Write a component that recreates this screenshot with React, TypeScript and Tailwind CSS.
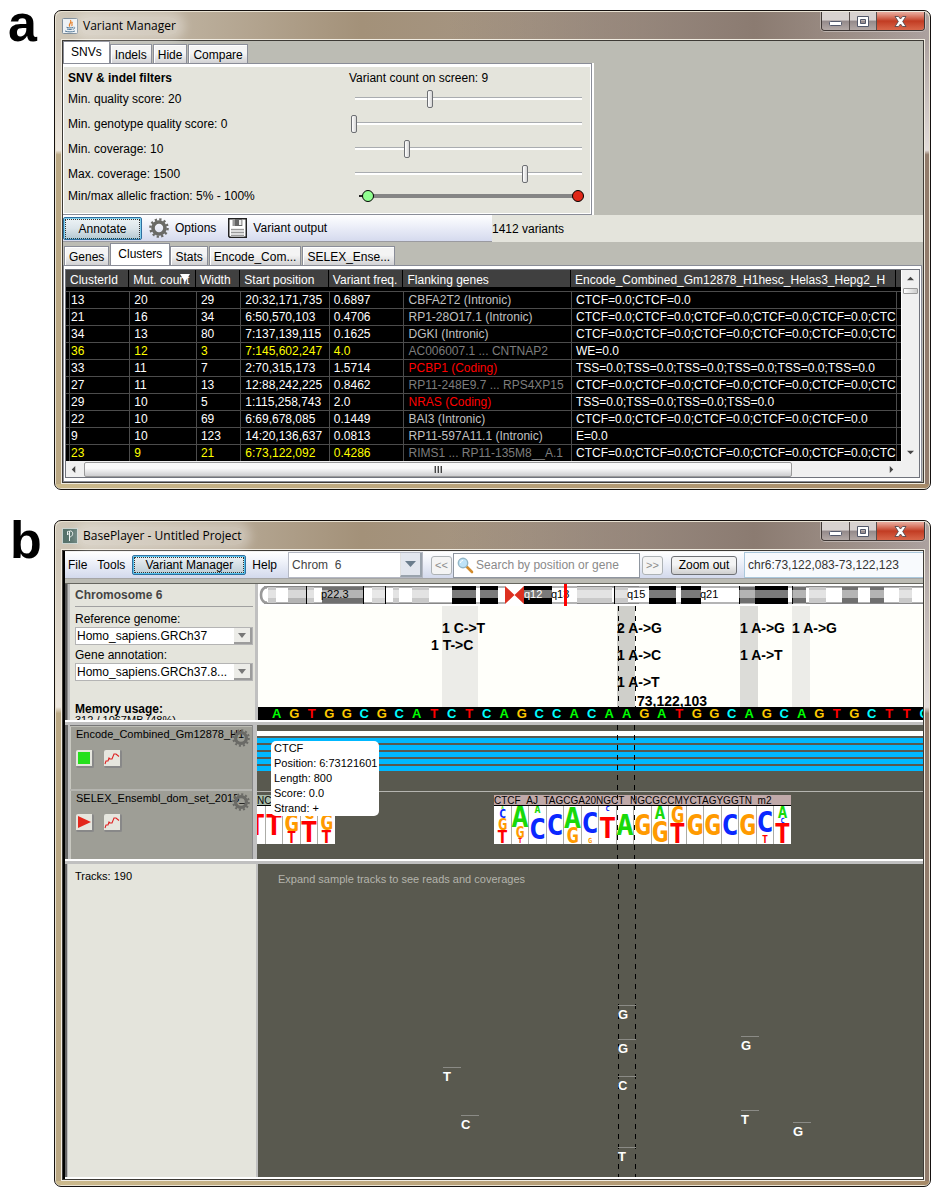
import React from "react";

/* ---------- window chrome ---------- */

function WindowControls() {
  return (
    <div className="absolute top-0 right-1 flex h-[19px] rounded-b-[4px] border border-t-0 border-[#3f3836] shadow-[0_0_0_1px_rgba(255,255,255,0.35)]">
      <button aria-label="Minimize" className="flex w-[28px] items-center justify-center rounded-bl-[3px] border-r border-[#574e4c] bg-linear-to-b from-[#d8d2d0] from-45% via-[#93898a] via-50% to-[#b3a9a6]">
        <svg width="13" height="12" viewBox="0 0 13 12"><rect x="0.5" y="6.5" width="12" height="4" rx="1" fill="#fff" stroke="#53586a" /></svg>
      </button>
      <button aria-label="Maximize" className="flex w-[27px] items-center justify-center border-r border-[#574e4c] bg-linear-to-b from-[#d8d2d0] from-45% via-[#93898a] via-50% to-[#b3a9a6]">
        <svg width="12" height="11" viewBox="0 0 12 11"><path fillRule="evenodd" d="M.5.5h11v10H.5zM3.500 3.500v4h5v-4z" fill="#fff" stroke="#53586a" /></svg>
      </button>
      <button aria-label="Close" className="flex w-[47px] items-center justify-center rounded-br-[3px] bg-linear-to-b from-[#e6a597] from-5% via-[#c23b22] via-50% to-[#d8664a]">
        <svg width="13" height="11" viewBox="0 0 13 11"><path d="M1 .5h3.500l2 2.500 2-2.500H12L8.700 5.500 12 10.500H8.500l-2-2.500-2 2.500H1l3.300-5z" fill="#fff" stroke="#53494f" strokeWidth="0.900" /></svg>
      </button>
    </div>
  );
}

function AppWindow({ title, icon, children }: { title: string; icon: React.ReactNode; children: React.ReactNode }) {
  return (
    <section className="flex-1 overflow-hidden rounded-[7px] border border-[#15110f] bg-[#e9e2d2] p-px">
      <header className="relative flex h-[27px] items-center rounded-t-[6px] bg-linear-to-r from-[#cfc7b8] via-[#a39179] via-35% to-[#aca19f] pl-[6px] font-['Open_Sans',sans-serif] text-[12px] text-black">
        <div className="absolute inset-0 rounded-t-[6px] bg-linear-to-r from-transparent from-45% via-[#8b7b71] via-80% to-transparent" />
        {icon}
        <h1 className="relative ml-[2px] rounded-full bg-white/30 px-[3px] leading-[18px] shadow-[0_0_10px_6px_rgba(255,255,255,0.3)]">{title}</h1>
        <WindowControls />
      </header>
      <div className="flex">
        <div className="w-[5px] bg-linear-to-b from-[#cdc4b4] from-0% via-[#ece6de] via-25% to-[#b9a783] to-26%" />
        <div className="min-w-0 flex-1 border border-[#f0ebe0]">
          <div className="border border-[#3d3a35] bg-[#bcbcb4]">{children}</div>
        </div>
        <div className="w-[4px] bg-linear-to-b from-[#aca19f] from-0% via-[#e2dcda] via-25% to-[#927c6c] to-26%" />
      </div>
      <div className="h-[4px] rounded-b-[5px] bg-linear-to-r from-[#cbb98c] to-[#a68a68]" />
    </section>
  );
}

function JavaIcon() {
  return (
    <svg className="relative" width="16" height="16" viewBox="0 0 16 16" aria-hidden="true">
      <rect x=".5" y=".5" width="15" height="15" rx="1" fill="#eef2f5" stroke="#7d8c99" />
      <path d="M8 8.500C5.500 6.500 10.500 5 8.500 2M9.500 8c2-1.500-1-2 1-4" fill="none" stroke="#e57a1f" strokeWidth="1.200" />
      <path d="M4.500 9.300c2 .8 4.500.8 6.500 0M5 11c2 .7 4 .7 5.500 0M3 13c3 1.200 7 1.200 10 0M11.500 9.200c2-.3 1.500 1.800-.5 2" fill="none" stroke="#4a7192" strokeWidth="1" />
    </svg>
  );
}

function PlayerIcon() {
  return (
    <svg className="relative" width="16" height="16" viewBox="0 0 16 16" aria-hidden="true">
      <rect x=".5" y=".5" width="15" height="15" fill="#56726b" stroke="#c9d3cf" />
      <path d="M5.500 7V3.500c2.500-1 3 2.500 0 3M7.500 13V3c4-1 4.500 5.500 0 6" fill="none" stroke="#eef3f0" />
    </svg>
  );
}

function Gear({ size }: { size: number }) {
  return (
    <svg className="shrink-0" width={size} height={size} viewBox="0 0 20 20" aria-hidden="true">
      <circle cx="10" cy="10" r="6" fill="none" stroke="#6a6a66" strokeWidth="3.600" />
      <circle cx="10" cy="10" r="8.600" fill="none" stroke="#6a6a66" strokeWidth="2.400" strokeDasharray="2.250 2.250" />
    </svg>
  );
}

/* ---------- variant manager ---------- */

function Tabs({ items, active }: { items: string[]; active: string }) {
  return (
    <div role="tablist" className="flex h-[21px] items-end gap-px">
      {items.map((t) => (
        <button
          key={t}
          role="tab"
          aria-selected={t === active}
          className={
            t === active
              ? "-mr-px h-[22px] border border-b-0 border-[#8a8d98] bg-white px-[7px] pb-[2px] leading-[18px]"
              : "h-[19px] border border-b-0 border-[#8a8d98] bg-linear-to-b from-[#f4f4f4] from-45% to-[#d2d2d4] px-[4px] pt-[2px] leading-[16px] shadow-[inset_1px_1px_0_#fff]"
          }
        >
          {t}
        </button>
      ))}
    </div>
  );
}

function FilterSlider({ label, value }: { label: string; value: number }) {
  return (
    <input
      type="range"
      aria-label={label}
      min={0}
      max={1000}
      defaultValue={value}
      className="ml-[2px] h-[18px] w-[235px] appearance-none bg-transparent bg-[linear-gradient(#a9acb0_0_1px,#fff_1px_3px)] bg-[length:227px_3px] bg-center bg-no-repeat [&::-webkit-slider-thumb]:h-[18px] [&::-webkit-slider-thumb]:w-[6px] [&::-webkit-slider-thumb]:appearance-none [&::-webkit-slider-thumb]:rounded-[2px] [&::-webkit-slider-thumb]:border [&::-webkit-slider-thumb]:border-[#6d6f73] [&::-webkit-slider-thumb]:bg-linear-to-r [&::-webkit-slider-thumb]:from-white [&::-webkit-slider-thumb]:to-[#d5d5d5]"
    />
  );
}

const filters = [
  { label: "Min. quality score: 20", value: 333 },
  { label: "Min. genotype quality score: 0", value: 0 },
  { label: "Min. coverage: 10", value: 232 },
  { label: "Max. coverage: 1500", value: 748 },
];

const roundThumb =
  "pointer-events-none absolute inset-0 w-full appearance-none bg-transparent [&::-webkit-slider-thumb]:pointer-events-auto [&::-webkit-slider-thumb]:h-[12px] [&::-webkit-slider-thumb]:w-[12px] [&::-webkit-slider-thumb]:appearance-none [&::-webkit-slider-thumb]:rounded-full [&::-webkit-slider-thumb]:border [&::-webkit-slider-thumb]:border-black";

function FilterPanel() {
  return (
    <div className="w-[531px] border-r-2 border-white">
      <div className="border border-l-0 border-[#8a8d98] bg-white pt-[3px] pr-px pb-px pl-px">
        <div className="h-[146px] bg-[#e4e4dc] pt-[2px] pl-[4px]">
          <div className="grid h-[17px] grid-cols-[281px_1fr] items-center">
            <b>SNV &amp; indel filters</b>
            <span>Variant count on screen: 9</span>
          </div>
          {filters.map((f) => (
            <div key={f.label} className="grid h-[25px] grid-cols-[281px_1fr] items-center">
              <span>{f.label}</span>
              <FilterSlider label={f.label} value={f.value} />
            </div>
          ))}
          <div className="grid h-[20px] grid-cols-[281px_1fr] items-center">
            <span>Min/max allelic fraction: 5% - 100%</span>
            <div className="relative ml-[2px] flex h-[14px] w-[233px] items-center pr-[6px] pl-[8px]">
              <div className="h-[2px] w-[6px] bg-[#222]" />
              <div className="h-[4px] flex-1 bg-[#858585]" />
              <input type="range" aria-label="Minimum allelic fraction" defaultValue={5} className={roundThumb + " h-[14px] [&::-webkit-slider-thumb]:bg-[#90ff90]"} />
              <input type="range" aria-label="Maximum allelic fraction" defaultValue={100} className={roundThumb + " h-[14px] [&::-webkit-slider-thumb]:bg-[#e02818]"} />
            </div>
          </div>
        </div>
      </div>
    </div>
  );
}

const ctcf = (n: number, tail = "") => Array(n).fill("CTCF=0.0").join(";") + tail;
const tss = (n: number) => Array(n).fill("TSS=0.0").join(";");

const clusterRows: [string, string, string, string, string, string, string, string][] = [
  ["13", "20", "29", "20:32,171,735", "0.6897", "CBFA2T2 (Intronic)", ctcf(2), "i"],
  ["21", "16", "34", "6:50,570,103", "0.4706", "RP1-28O17.1 (Intronic)", ctcf(5, ";CTC"), "i"],
  ["34", "13", "80", "7:137,139,115", "0.1625", "DGKI (Intronic)", ctcf(5, ";CTC"), "i"],
  ["36", "12", "3", "7:145,602,247", "4.0", "AC006007.1 ... CNTNAP2", "WE=0.0", "hn"],
  ["33", "11", "7", "2:70,315,173", "1.5714", "PCBP1 (Coding)", tss(6), "c"],
  ["27", "11", "13", "12:88,242,225", "0.8462", "RP11-248E9.7 ... RPS4XP15", ctcf(5, ";CTC"), "n"],
  ["29", "10", "5", "1:115,258,743", "2.0", "NRAS (Coding)", tss(4), "c"],
  ["22", "10", "69", "6:69,678,085", "0.1449", "BAI3 (Intronic)", ctcf(5), "i"],
  ["9", "10", "123", "14:20,136,637", "0.0813", "RP11-597A11.1 (Intronic)", "E=0.0", "i"],
  ["23", "9", "21", "6:73,122,092", "0.4286", "RIMS1 ... RP11-135M8__A.1", ctcf(5, ";CTC"), "hn"],
];

const columns = ["ClusterId", "Mut. count", "Width", "Start position", "Variant freq.", "Flanking genes", "Encode_Combined_Gm12878_H1hesc_Helas3_Hepg2_H"];

function geneColor(flags: string) {
  if (flags.includes("c")) return "text-[#ff0000]";
  if (flags.includes("n")) return "text-[#7d7d7d]";
  return "text-[#c0c0c0]";
}

function ClusterTable() {
  return (
    <table className="min-w-0 flex-1 table-fixed border-collapse bg-black text-[12px] text-white">
      <colgroup>
        <col className="w-[64px]" />
        <col className="w-[67px]" />
        <col className="w-[45px]" />
        <col className="w-[89px]" />
        <col className="w-[75px]" />
        <col className="w-[168px]" />
        <col />
        <col className="w-[5px]" />
      </colgroup>
      <thead>
        <tr className="h-[21px]">
          {columns.map((c, i) => (
            <th key={c} className="overflow-hidden p-0 text-left font-normal whitespace-nowrap">
              <div className="relative mr-px mb-[3px] h-[17px] bg-[#404040] pl-[4px] leading-[20px]">
                {c}
                {i === 1 && (
                  <svg className="absolute top-[4px] right-[5px]" width="10" height="8" viewBox="0 0 10 8" aria-hidden="true"><path d="M0 0h10L5 8z" fill="#fff" /></svg>
                )}
              </div>
            </th>
          ))}
          <th className="p-0" aria-label="Overflow"><div className="mb-[3px] h-[17px] bg-[#404040]" /></th>
        </tr>
      </thead>
      <tbody>
        {clusterRows.map((r) => {
          const hot = r[7].includes("h");
          return (
            <tr key={r[0]} className="h-[17px] border-t border-[#4c4c4c]">
              {r.slice(0, 7).map((v, i) => (
                <td
                  key={i}
                  className={
                    "overflow-hidden p-0 leading-[16px] whitespace-nowrap " +
                    (i === 5 ? geneColor(r[7]) : hot && i < 5 ? "text-[#ffff00]" : "text-white")
                  }
                >
                  <div className={(i === 0 ? "ml-[3px] pl-px" : "pl-[4px]") + " h-[16px] border-l border-[#4c4c4c]"}>{v}</div>
                </td>
              ))}
              <td className="border-l border-[#4c4c4c] p-0" />
            </tr>
          );
        })}
      </tbody>
    </table>
  );
}

function Triangle({ dir }: { dir: "up" | "down" | "left" | "right" }) {
  const d = { up: "M0 6 4 2 8 6z", down: "M0 2h8L4 6z", left: "M6 0v8L2 4z", right: "M2 0l4 4-4 4z" }[dir];
  return <svg width="7" height="7" viewBox="0 0 8 8" aria-hidden="true"><path d={d} fill="#444" /></svg>;
}

function VariantManager() {
  return (
    <>
      <div className="pt-px">
        <Tabs items={["SNVs", "Indels", "Hide", "Compare"]} active="SNVs" />
      </div>
      <FilterPanel />
      <div className="flex h-[27px] bg-[#e4e4dc]">
        <div className="flex w-[429px] items-center border-b border-[#9a9aa0] bg-linear-to-b from-white via-[#f0f2fa] via-35% to-[#d5daee]">
          <button className="h-[23px] w-[79px] rounded-[2px] border border-[#2f6f9f] bg-linear-to-b from-[#eef4f6] via-[#dbe5ea] to-[#b4c8d2] p-px leading-[18px] shadow-[inset_0_0_0_1px_#7fd0ee]">
            <span className="block border border-dotted border-[#333]">Annotate</span>
          </button>
          <button className="ml-[7px] flex items-center gap-[6px]">
            <Gear size={20} />
            Options
          </button>
          <button className="ml-[12px] flex items-center gap-[6px]">
            <svg width="19" height="20" viewBox="0 0 19 20" aria-hidden="true">
              <path d="M.75.75h17.500v18.500H1.750l-1-1z" fill="#fff" stroke="#222" strokeWidth="1.500" />
              <rect x="4.500" y="1" width="10" height="7" fill="#999" />
              <rect x="7" y="1" width="7" height="7" fill="#666" />
              <rect x="11" y="2" width="2.500" height="5" fill="#eee" />
              <path d="M3 10.500h13v8H3z" fill="#ddd" /><path d="M3 11.500h13M3 14.500h13M3 17.500h13" stroke="#999" />
            </svg>
            Variant output
          </button>
        </div>
        <span className="leading-[28px]">1412 variants</span>
      </div>
      <div className="pt-[2px] pl-px">
        <Tabs items={["Genes", "Clusters", "Stats", "Encode_Com...", "SELEX_Ense..."]} active="Clusters" />
      </div>
      <div className="mr-px border border-[#8a8d98] bg-white pt-[3px] pr-px pb-[3px] pl-px">
        <div className="border border-[#70737c] bg-[#f0f0f0]">
          <div className="flex">
            <ClusterTable />
            <div className="flex w-[18px] flex-col items-center border-l border-white pt-[5px] pb-[5px]">
              <Triangle dir="up" />
              <div className="mt-[6px] h-[6px] w-[15px] rounded-[1px] border border-[#9a9a9a] bg-linear-to-r from-white to-[#ccc]" />
              <div className="flex-1" />
              <Triangle dir="down" />
            </div>
          </div>
          <div className="flex h-[16px] items-center pr-[24px] pl-[4px]">
            <Triangle dir="left" />
            <div className="ml-[7px] flex h-[15px] w-[708px] items-center justify-center gap-px rounded-[2px] border border-[#9a9a9a] bg-linear-to-b from-[#fafafa] from-40% to-[#cdcdcf]">
              {[0, 1, 2].map((i) => <i key={i} className="h-[7px] w-[2px] border-r border-[#444] bg-[#aaa]" />)}
            </div>
            <div className="flex-1" />
            <Triangle dir="right" />
          </div>
        </div>
      </div>
    </>
  );
}

/* ---------- base player ---------- */

function MenuBar() {
  const step = "h-[19px] w-[21px] rounded-[3px] border border-[#adb2b5] bg-[#f4f4f4] text-[11px] leading-[16px] text-[#8b8b8b]";
  return (
    <div className="flex h-[28px] items-center border-t border-b border-t-[#f2f2f2] border-b-[#a5a5a5] bg-linear-to-b from-white via-[#f0f3fa] via-35% to-[#d3d9ec]">
      <button className="pl-[3px]">File</button>
      <button className="ml-[10px]">Tools</button>
      <button className="ml-[7px] h-[20px] w-[114px] rounded-[2px] border border-[#2f6f9f] bg-linear-to-b from-[#eef2f4] to-[#bccdd6] p-px leading-[14px] shadow-[inset_0_0_0_1px_#55c3ee]">
        <span className="block border border-dotted border-[#333]">Variant Manager</span>
      </button>
      <button className="ml-[6px]">Help</button>
      <div className="relative ml-[11px] h-[26px] w-[135px] border border-[#b5b9c4]">
        <select aria-label="Chromosome" className="h-full w-full appearance-none bg-white pl-[3px] text-[#444]">
          <option>Chrom&nbsp; 6</option>
        </select>
        <span className="pointer-events-none absolute top-0 right-0 flex h-full w-[22px] items-center justify-center border-r-2 border-b-2 border-l border-[#9aa3ad] border-l-[#e0e0e0] bg-[#e2e6ee]">
          <svg width="11" height="6" viewBox="0 0 11 6" aria-hidden="true"><path d="M0 0h11L5.500 6z" fill="#6b7d8d" /></svg>
        </span>
      </div>
      <button className={step + " ml-[8px]"}>&lt;&lt;</button>
      <label className="ml-px flex h-[25px] w-[187px] items-center border border-[#8f96a0] bg-white pl-[3px]">
        <svg className="shrink-0" width="17" height="17" viewBox="0 0 17 17" aria-hidden="true">
          <path d="M9.500 9.500l5.500 5.500" stroke="#d28b2c" strokeWidth="2.600" strokeLinecap="round" />
          <circle cx="6" cy="6" r="4.700" fill="#bfe3f7" stroke="#93b6c6" strokeWidth="1.400" />
          <path d="M3.500 6c0-1.500 1-2.500 2.500-2.500" stroke="#fff" fill="none" />
        </svg>
        <input aria-label="Search" placeholder="Search by position or gene" className="ml-[2px] w-full min-w-0 bg-transparent outline-none placeholder:text-[#8a8a8a]" />
      </label>
      <button className={step + " ml-[2px]"}>&gt;&gt;</button>
      <button className="ml-[8px] h-[19px] w-[66px] rounded-[3px] border border-[#6f7175] bg-linear-to-b from-[#f4f4f4] from-45% to-[#cfcfcf] leading-[16px]">Zoom out</button>
      <input aria-label="Location" defaultValue="chr6:73,122,083-73,122,123" className="ml-[7px] h-[26px] min-w-0 flex-1 border border-r-0 border-[#abc8dc] bg-[#f8fafd] pl-[3px] text-[#333] outline-none" />
    </div>
  );
}

function SmallSelect({ id, label, value }: { id: string; label: string; value: string }) {
  return (
    <div className="pt-[3px]">
      <label htmlFor={id} className="block h-[14px] leading-[14px]">{label}</label>
      <div className="relative mt-px h-[18px] border border-[#b4b4b4]">
        <select id={id} className="block h-full w-full appearance-none bg-white pl-px">
          <option>{value}</option>
        </select>
        <span className="pointer-events-none absolute top-0 right-0 flex h-full w-[18px] items-center justify-center border-r-2 border-b-2 border-[#9c9c9c] bg-[#ecece8]">
          <svg width="8" height="5" viewBox="0 0 8 5" aria-hidden="true"><path d="M0 0h8L4 5z" fill="#777" /></svg>
        </span>
      </div>
    </div>
  );
}

const bands: [number, number, string][] = [
  [268, 276, "#c9c9c9"], [288, 306, "#b4b4b4"], [306, 307, "#000"], [307, 314, "#c9c9c9"],
  [322, 363, "#6f6f6f"], [363, 364, "#000"], [372, 385, "#d4d4d4"], [385, 386, "#000"],
  [393, 399, "#c9c9c9"], [412, 429, "#c9c9c9"], [452, 476, "#000"], [480, 498, "#000"],
  [524, 552, "#000"], [577, 612, "#c9c9c9"], [614, 615, "#000"], [615, 628, "#c9c9c9"],
  [649, 676, "#000"], [681, 701, "#000"], [739, 740, "#000"], [740, 755, "#6f6f6f"],
  [755, 788, "#000"], [792, 793, "#000"], [793, 806, "#6f6f6f"], [809, 826, "#c9c9c9"],
  [842, 858, "#6f6f6f"], [870, 884, "#6f6f6f"], [899, 912, "#c9c9c9"],
];

function Ideogram() {
  return (
    <svg className="block" width="665" height="22" viewBox="258 584 665 22" aria-label="Chromosome 6 bands">
      <rect x="258" y="584" width="665" height="22" fill="#fff" />
      <path d="M264 586h241v18H264zM524 586h399v18H524z" fill="#b4b4b4" />
      <path d="M264 588h241v14H264zM524 588h399v14H524z" fill="#fff" />
      {bands.map(([a, b, c]) => <rect key={a} x={a} y={c === "#000" ? 586 : 587} width={b - a} height={c === "#000" ? 18 : 16} fill={c} />)}
      <path d="M264 586h188v1H264zM577 586h62v1H577zM806 586h117v1H806zM264 603h188v1H264zM577 603h62v1H577zM806 603h117v1H806z" fill="#888" />
      <path d="M266 590h239v8H266zM524 590h399v8H524z" fill="#fff" opacity=".48" />
      <path d="M306 586h1v18h-1zM363 586h1v18h-1zM385 586h1v18h-1zM614 586h1v18h-1z" fill="#000" />
      <path d="M267 587.500h-2q-4 2-4 7.500t4 7.500h2" fill="none" stroke="#999" strokeWidth="2.600" />
      <path d="M505 586l9.500 9-9.500 9zM524 586l-9.500 9 9.500 9z" fill="#dd3020" />
      <g fontFamily="Liberation Sans, sans-serif" fontSize="11">
        <text x="321" y="598">p22.3</text>
        <text x="524" y="598" fill="#fff">q12</text>
        <text x="551" y="598">q13</text>
        <text x="627" y="598">q15</text>
        <text x="700" y="598">q21</text>
      </g>
      <rect x="564" y="584" width="3" height="22" fill="#ff0000" />
    </svg>
  );
}

const changes: { x: number; y: number; t: string }[] = [
  { x: 184, y: 14, t: "1 C->T" }, { x: 173, y: 31, t: "1 T->C" },
  { x: 359, y: 14, t: "2 A->G" }, { x: 359, y: 41, t: "1 A->C" }, { x: 359, y: 68, t: "1 A->T" },
  { x: 379, y: 87, t: "73,122,103" },
  { x: 482, y: 14, t: "1 A->G" }, { x: 482, y: 41, t: "1 A->T" }, { x: 534, y: 14, t: "1 A->G" },
];

const sequence = "AGTGGCGCATCTCAGCCACAAGATGGCAGCAGTGCTTC".split("");
const baseColor: Record<string, string> = { A: "text-[#00ff00]", C: "text-[#00ffff]", G: "text-[#ffc800]", T: "text-[#ff0000]" };

function Guides() {
  return (
    <div aria-hidden="true" className="pointer-events-none absolute inset-y-0 left-[360px] w-[18px] bg-[repeating-linear-gradient(#000_0_5px,transparent_5px_10px),repeating-linear-gradient(#000_0_5px,transparent_5px_10px)] bg-[length:1px_100%] bg-[position:left_top,right_top] bg-no-repeat" />
  );
}

function VariantCanvas() {
  return (
    <div className="relative flex min-w-0 flex-1 flex-col overflow-hidden bg-[#fffffa]">
      <Ideogram />
      <div className="relative h-[101px] font-bold text-black">
        <div className="absolute inset-y-0 left-[184px] w-[36px] bg-[#ecece8]" />
        <div className="absolute inset-y-0 left-[359px] w-[18px] bg-[#cfcfca]" />
        <div className="absolute inset-y-0 left-[482px] w-[18px] bg-[#dcdcd8]" />
        <div className="absolute inset-y-0 left-[534px] w-[18px] bg-[#ecece8]" />
        <Guides />
        {changes.map((c) => (
          <span key={c.t + c.x} className="absolute text-[14px] leading-[16px] whitespace-pre" style={{ left: c.x, top: c.y }}>{c.t}</span>
        ))}
      </div>
      <div className="h-[13px] overflow-hidden bg-black">
        <div className="-mr-[10px] ml-[10px] grid grid-cols-[repeat(38,minmax(0,1fr))] text-center text-[13px] leading-[14px] font-bold">
          {sequence.map((b, i) => <span key={i} className={baseColor[b]}>{b}</span>)}
        </div>
      </div>
    </div>
  );
}

function TrackHeader({ name, kind }: { name: string; kind: "square" | "play" }) {
  const btn = "flex h-[18px] w-[18px] items-center justify-center rounded-[2px] border-r-2 border-b-2 border-[#888] bg-[#e6e6de]";
  return (
    <div className="relative h-full w-[182px] border-l border-[#c8c8c0] bg-[#9e9e96] pt-[1px] pl-[5px] text-[11px] leading-[13px] text-black">
      <div className="whitespace-nowrap">{name}</div>
      <span className="absolute top-[2px] right-[2px]"><Gear size={18} /></span>
      <div className="mt-[9px] flex gap-[10px]">
        <button aria-label={kind === "square" ? "Show track" : "Play track"} className={btn}>
          {kind === "square" ? (
            <svg width="12" height="12"><rect width="12" height="12" fill="#25e01c" /></svg>
          ) : (
            <svg width="13" height="12"><path d="M0 0l13 6-13 6z" fill="#e3271c" /></svg>
          )}
        </button>
        <button aria-label="Graph" className={btn}>
          <svg width="16" height="14" viewBox="0 0 16 14"><path d="M1 13l1-3h2l1-3 1 1h2l2-5h2l3 2.500" fill="none" stroke="#d22" strokeWidth="1.100" /></svg>
        </button>
      </div>
    </div>
  );
}

const logoColor: Record<string, string> = { A: "#19d90a", C: "#0a28ff", G: "#ff9a00", T: "#ff0000" };

function LogoColumns({ stacks, left }: { stacks: [string, number][][]; left: number }) {
  return (
    <g fontFamily="DejaVu Sans Mono, monospace" fontWeight="bold" textAnchor="middle">
      {stacks.map((stack, i) => {
        const x = left + i * 17.5;
        let y = 0;
        return (
          <g key={i}>
            <rect x={x} y="0" width="17" height="38" fill="#fff" />
            {stack.map(([b, h], j) => {
              const size = Math.max(4, Math.min(29, Math.round(h / 0.73)));
              const base = y + h / 2 + size * 0.365;
              y += h;
              return <text key={j} x={x + 8.5} y={base} fontSize={size} fill={logoColor[b]}>{b}</text>;
            })}
          </g>
        );
      })}
    </g>
  );
}

const motif: [string, number][][] = [
  [["A", 3], ["C", 9], ["G", 12], ["T", 13]],
  [["A", 21], ["G", 11], ["T", 5]],
  [["A", 7], ["C", 30]],
  [["C", 37]],
  [["A", 22], ["G", 15]],
  [["C", 32], ["G", 5]],
  [["C", 5], ["T", 32]],
  [["A", 37]],
  [["G", 37]],
  [["A", 13], ["G", 24]],
  [["G", 17], ["T", 20]],
  [["G", 37]],
  [["G", 37]],
  [["C", 37]],
  [["G", 37]],
  [["C", 30], ["T", 7]],
  [["A", 12], ["C", 5], ["T", 20]],
];

const edgeMotif: [string, number][][] = [
  [["T", 37]],
  [["T", 37]],
  [["A", 8], ["G", 18], ["T", 11]],
  [["G", 13], ["T", 24]],
  [["A", 8], ["G", 16], ["T", 13]],
];

function Tooltip() {
  return (
    <div role="tooltip" className="absolute top-[16px] left-[14px] z-10 h-[75px] w-[108px] rounded-[5px] bg-white pl-[3px] text-[11px] leading-[15px] whitespace-nowrap text-black">
      <p>CTCF</p>
      <p>Position: 6:73121601</p>
      <p>Length: 800</p>
      <p>Score: 0.0</p>
      <p>Strand: +</p>
    </div>
  );
}

function Tracks() {
  return (
    <div className="relative flex min-w-0 flex-1 flex-col bg-[#59594f]">
      <div className="h-[67px] border-b border-[#b5b5b0] pt-[6px]">
        <div className="h-[5px] bg-white" />
        <div className="mt-[2px] flex flex-col gap-[2px]">
          {[0, 1, 2, 3, 4].map((i) => <div key={i} className="h-[5px] bg-[#00b8ff]" />)}
        </div>
      </div>
      <div className="relative flex-1 overflow-hidden text-[10px] text-black">
        <div className="absolute top-[3px] left-0 w-[79px]">
          <div className="h-[11px] w-[16px] overflow-hidden border-b border-black bg-[#a9bba9] leading-[11px]">NCT</div>
          <svg className="block" width="79" height="38" viewBox="0 0 79 38" aria-label="Sequence motif"><LogoColumns stacks={edgeMotif} left={-9} /></svg>
        </div>
        <div className="absolute top-[3px] left-[237px] w-[297px]">
          <div className="h-[11px] overflow-hidden border-b border-black bg-[#c0a9a9] leading-[11px] whitespace-nowrap">CTCF_AJ_TAGCGA20NGCT_NGCGCCMYCTAGYGGTN_m2</div>
          <svg className="block" width="297" height="38" viewBox="0 0 297 38" aria-label="CTCF sequence motif"><LogoColumns stacks={motif} left={0} /></svg>
        </div>
      </div>
      <Tooltip />
      <Guides />
    </div>
  );
}

const calls: { x: number; y: number; b: string }[] = [
  { x: 360, y: 141, b: "G" }, { x: 360, y: 175, b: "G" }, { x: 360, y: 212, b: "C" }, { x: 360, y: 283, b: "T" },
  { x: 483, y: 172, b: "G" }, { x: 483, y: 246, b: "T" }, { x: 535, y: 258, b: "G" },
  { x: 185, y: 203, b: "T" }, { x: 203, y: 251, b: "C" },
];

function Splitter() {
  return <div className="h-[5px] border-t-2 border-white bg-[#c0c0c0]" />;
}

function BasePlayer() {
  return (
    <div className="flex">
      <div className="w-[2px] bg-black" />
      <div className="min-w-0 flex-1">
        <MenuBar />
        <div className="h-[5px] border-b border-[#66665f] bg-[#bcbcb4]" />
        <div className="flex h-[136px]">
          <div className="w-[5px] border-r-2 border-l-2 border-r-[#c0c0c0] border-l-[#555] bg-[#888]" />
          <div className="h-full w-[185px] overflow-hidden bg-[#e4e4dc] pt-[3px] pr-[2px] pl-[5px]">
            <h2 className="h-[20px] border-b border-[#a0a0a0] leading-[16px] font-bold text-[#444]">Chromosome 6</h2>
            <div className="pt-[2px]">
              <SmallSelect id="genome" label="Reference genome:" value="Homo_sapiens.GRCh37" />
              <SmallSelect id="annotation" label="Gene annotation:" value="Homo_sapiens.GRCh37.8..." />
            </div>
            <div className="mt-[21px] leading-[14px] font-bold">Memory usage:</div>
            <div className="-mt-[2px] text-[11px] leading-[12px]">312 / 1067MB (48%)</div>
          </div>
          <div className="w-[3px] bg-[#c0c0c0]" />
          <VariantCanvas />
        </div>
        <Splitter />
        <div className="flex h-[134px]">
          <div className="w-[5px] border-r-2 border-[#c0c0c0] bg-[#666]" />
          <div className="flex flex-col border-t border-[#777]">
            <div className="h-[65px] border-b-2 border-[#b5b5b0] pt-[1px]"><TrackHeader name="Encode_Combined_Gm12878_H1" kind="square" /></div>
            <div className="flex-1"><TrackHeader name="SELEX_Ensembl_dom_set_2015_" kind="play" /></div>
          </div>
          <div className="w-[5px] border-l border-[#888] bg-[#c0c0c0]" />
          <Tracks />
        </div>
        <Splitter />
        <div className="flex h-[315px] border-b-2 border-white">
          <div className="w-[3px] border-r border-[#c0c0c0] bg-[#666]" />
          <div className="w-[188px] bg-[#e4e4dc] pt-[5px] pl-[7px] text-[11px] leading-[14px]">Tracks: 190</div>
          <div className="w-[2px] bg-[#c0c0c0]" />
          <div className="relative min-w-0 flex-1 overflow-hidden bg-[#59594f]">
            <p className="pt-[8px] pl-[20px] text-[11px] leading-[14px] text-[#b4b4ac]">Expand sample tracks to see reads and coverages</p>
            <Guides />
            {calls.map((c) => (
              <span key={c.x + "-" + c.y} className="absolute w-[18px] border-t border-[#8b8b86] pt-px text-[13px] leading-[16px] font-bold text-white" style={{ left: c.x, top: c.y }}>{c.b}</span>
            ))}
          </div>
        </div>
      </div>
    </div>
  );
}

export default function App() {
  return (
    <main className="flex min-h-screen flex-col gap-[30px] bg-white pt-[10px] pr-[11px] pb-[6px] font-['Liberation_Sans',Arial,sans-serif] text-[12px] leading-[16px] text-black">
      <div className="flex">
        <div className="w-[54px] pl-[8px] text-[52px] leading-[26px] font-bold">a</div>
        <AppWindow title="Variant Manager" icon={<JavaIcon />}><VariantManager /></AppWindow>
      </div>
      <div className="flex">
        <div className="w-[54px] pl-[10px] text-[52px] leading-[40px] font-bold">b</div>
        <AppWindow title="BasePlayer - Untitled Project" icon={<PlayerIcon />}><BasePlayer /></AppWindow>
      </div>
    </main>
  );
}
